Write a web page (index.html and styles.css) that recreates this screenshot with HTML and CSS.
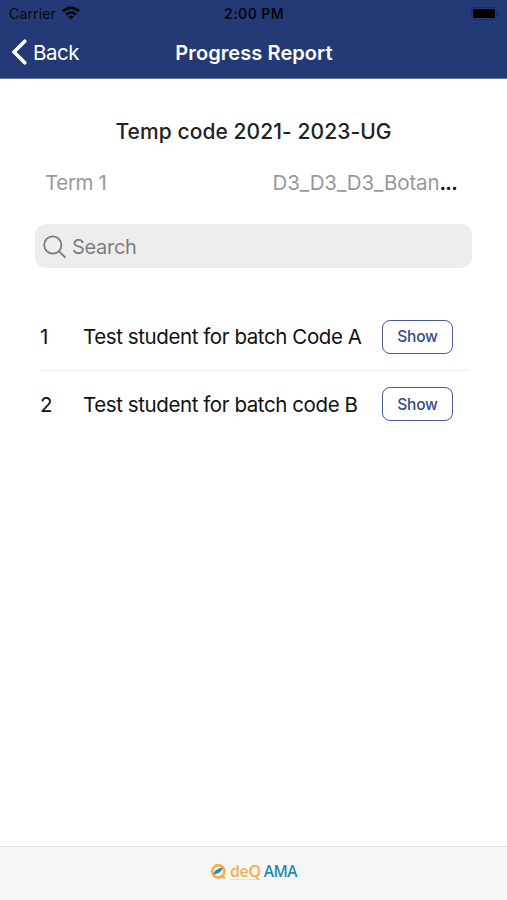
FILE: index.html
```html
<!DOCTYPE html>
<html lang="en">
<head>
<meta charset="utf-8">
<title>Progress Report</title>
<link rel="stylesheet" href="styles.css">
</head>
<body>
<header class="top">
  <div class="status">
    <div class="carrier">
      <span>Carrier</span>
      <svg class="wifi" viewBox="0 0 18 14" width="18" height="14" fill="none" stroke="#05070d" stroke-width="2.6">
        <path d="M1 5.200C5.600 .8 12.400 .8 17 5.200"/>
        <path d="M4 8.600C6.900 5.900 11.100 5.900 14 8.600"/>
        <path d="M9 13.500 6.200 10.700Q9 8.400 11.800 10.700Z" fill="#05070d" stroke="none"/>
      </svg>
    </div>
    <span class="time">2:00 PM</span>
    <svg class="battery" viewBox="0 0 28 14" width="28" height="14">
      <rect x=".5" y=".5" width="25" height="12" rx="3.500" fill="none" stroke="#1b2f65"/>
      <rect x="2" y="2" width="22" height="9" rx="1.500" fill="#000"/>
      <path d="M26.500 4.500Q28.500 6.500 26.500 8.500Z" fill="#182a5c"/>
    </svg>
  </div>
  <nav class="nav">
    <a class="back">
      <svg width="16" height="26" viewBox="0 0 16 26" fill="none" stroke="#fff" stroke-width="3.600" stroke-linecap="round" stroke-linejoin="round"><path d="M13.800 2.200 3 13 13.800 23.800"/></svg>
      <span>Back</span>
    </a>
    <h1>Progress Report</h1>
  </nav>
</header>
<main>
  <h2>Temp code 2021- 2023-UG</h2>
  <div class="filters">
    <span class="term">Term 1</span>
    <span class="subject">D3_D3_D3_Botan<b>...</b></span>
  </div>
  <label class="search">
    <svg width="24" height="24" viewBox="0 0 24 24" fill="none" stroke="#77777b" stroke-width="1.700"><circle cx="9.800" cy="10" r="8.600"/><path d="M16 16.200 22.400 22.600"/></svg>
    <span>Search</span>
  </label>
  <ul class="students">
    <li><span class="num">1</span><span class="name">Test student for batch Code A</span><button>Show</button></li>
    <li><span class="num">2</span><span class="name">Test student for batch code B</span><button>Show</button></li>
  </ul>
</main>
<footer>
  <svg width="17" height="17" viewBox="0 0 17 17"><circle cx="8.300" cy="8.300" r="6.100" fill="#fff" stroke="#f4b34e" stroke-width="3"/><path d="M11.500 13.500 15 15" stroke="#f4b34e" stroke-width="2.400"/><path d="M3.500 11.500C4 7.500 7 5.500 12.800 4.700C11.500 8.500 9 10.500 3.500 11.500Z" fill="#258dae"/></svg>
  <span class="deq">deQ</span>
  <span class="ama">AMA</span>
</footer>
</body>
</html>
```
FILE: styles.css
```css
* { box-sizing: border-box; }
body { margin: 0; height: 900px; display: flex; flex-direction: column; background: #fff; font-family: Inter, sans-serif; color: #111; white-space: nowrap; overflow: hidden; }
.top { height: 79px; background: #233a77; border-bottom: 1px solid #6876a2; }
.status { height: 27px; display: grid; grid-template-columns: 1fr auto 1fr; align-items: center; padding: 0 8px 0 9px; color: #05070d; font-size: 14px; }
.carrier { display: flex; align-items: center; gap: 6px; letter-spacing: .15px; }
.wifi { margin-top: -2px; }
.time { font-weight: 600; letter-spacing: .4px; }
.battery { justify-self: end; }
.nav { height: 50px; display: grid; grid-template-columns: 1fr auto 1fr; align-items: center; padding: 0 11px; color: #fff; }
.back { display: flex; align-items: center; gap: 6px; font-size: 20.5px; letter-spacing: -.45px; }
h1 { margin: 0; padding: 1px 0 0 1px; font-size: 20px; font-weight: 600; letter-spacing: .08px; }
main { flex: 1; padding: 0 35px; }
h2 { margin: 37px 0 0; line-height: 32px; text-align: center; font-size: 21px; font-weight: 500; letter-spacing: .08px; color: #222; }
.filters { display: flex; justify-content: space-between; margin-top: 23px; padding: 0 15px 0 10px; line-height: 24px; font-size: 20.5px; color: #98989c; }
.term { letter-spacing: -.35px; }
.subject { letter-spacing: -.12px; }
.filters b { color: #111; font-weight: 600; letter-spacing: -.7px; }
.search { display: flex; align-items: center; gap: 5px; height: 44px; margin-top: 29px; padding: 1px 0 0 8px; border-radius: 11px; background: #ededed; color: #7d7d81; font-size: 20px; letter-spacing: -.3px; }
.students { list-style: none; margin: 35px 0 0; padding: 0 4px 0 5px; }
li { display: flex; align-items: center; height: 67px; padding-right: 15px; font-size: 20.500px; letter-spacing: -.41px; }
li:first-child { height: 68px; border-bottom: 1px solid #ededed; }
.num { width: 43px; }
.name { flex: 1; }
button { width: 71px; height: 34px; padding: 0; border: 1.500px solid #485b93; border-radius: 8px; background: #fff; color: #354a87; font: 500 15.500px Inter, sans-serif; letter-spacing: -.25px; }
li:last-child { height: 66px; }
footer { height: 54px; display: flex; align-items: center; justify-content: center; padding-bottom: 4px; border-top: 1px solid #e4e4e4; background: #f6f6f6; }
.deq { margin: -1px 0 0 3px; border-bottom: 1px solid #f8dfb8; color: #f2b04c; font: 600 16px/16px "Open Sans", sans-serif; letter-spacing: -.3px; }
.ama { margin: -2px 0 0 3px; color: #258dae; font: 600 15.500px/16px "Open Sans", sans-serif; letter-spacing: -.5px; }
```
